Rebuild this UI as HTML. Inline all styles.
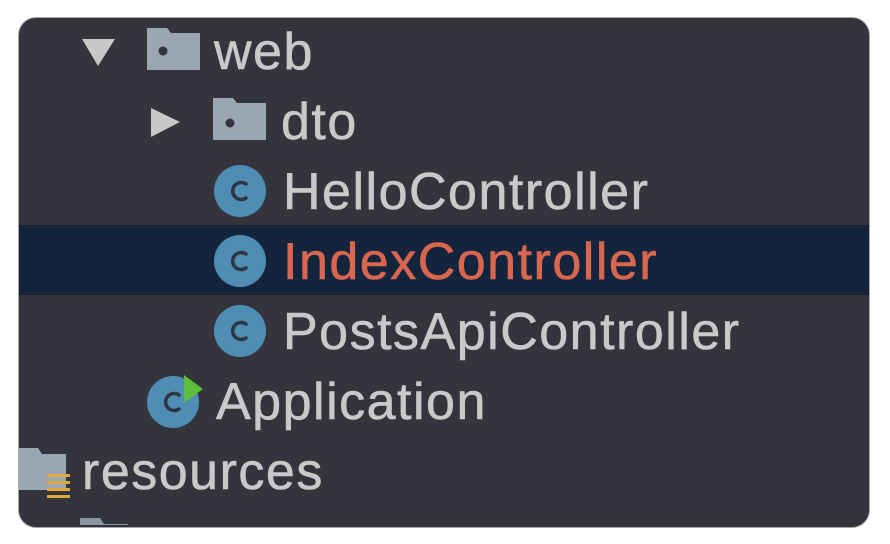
<!DOCTYPE html>
<html><head><style>
html,body{margin:0;padding:0;background:#fff;width:890px;height:544px;overflow:hidden}
.panel{position:absolute;left:18px;top:17px;width:850px;height:509px;background:#33343c;border:1.5px solid #a8a8a8;border-radius:18px;overflow:hidden}
.sel{position:absolute;left:0;top:207px;width:100%;height:70px;background:#13243c}
.t{position:absolute;font-family:"Liberation Sans",sans-serif;font-size:52px;line-height:52px;color:#c9c9c9;letter-spacing:1.5px;white-space:nowrap;-webkit-text-stroke:0.6px currentColor}
svg{position:absolute}
</style></head><body>
<div class="panel">
<div class="sel"></div>
</div>
<svg width="890" height="544" style="left:0;top:0">
<defs><clipPath id="cp"><rect x="19" y="18" width="849" height="507" rx="17"/></clipPath></defs>
<g clip-path="url(#cp)">
<polygon points="82,39 115,39 98,66" fill="#c8c8c8"/>
<path d="M147,28 h20 l4,5 h29 v37 h-53z" fill="#9aa6b2"/>
<circle cx="163" cy="51" r="4.5" fill="#33343c"/>
<polygon points="151,108 151,137 180,122" fill="#c8c8c8"/>
<path d="M213,98 h20 l4,5 h29 v37 h-53z" fill="#9aa6b2"/>
<circle cx="230" cy="123" r="4.5" fill="#33343c"/>
<g fill="#4f8db5">
<circle cx="240" cy="191" r="26"/><circle cx="240" cy="261" r="26"/><circle cx="240" cy="331" r="26"/><circle cx="173" cy="402" r="26"/>
</g>
<g fill="none" stroke="#2d3440" stroke-width="3.5" stroke-linecap="round">
<path d="M246,184 a8.5,8.5 0 1 0 0,14"/>
<path d="M246,254 a8.5,8.5 0 1 0 0,14"/>
<path d="M246,324 a8.5,8.5 0 1 0 0,14"/>
<path d="M179,395 a8.5,8.5 0 1 0 0,14"/>
</g>
<polygon points="184,375 184,403 203,389" fill="#5fbf3a"/>
<path d="M18,448 h20 l4,6 h24 v36 h-48z" fill="#9aa6b2"/>
<g fill="#e0a93a"><rect x="47" y="474" width="23" height="3"/><rect x="47" y="481" width="23" height="3"/><rect x="47" y="488" width="23" height="3"/><rect x="47" y="495" width="23" height="3"/></g>
<path d="M80,518 h20 l4,6 h24 v30 h-48z" fill="#8a96a2"/>
</g>
</svg>
<div class="t" style="left:214px;top:26px">web</div>
<div class="t" style="left:281px;top:96px">dto</div>
<div class="t" style="left:283px;top:166px">HelloController</div>
<div class="t" style="left:283px;top:236px;color:#d9674f">IndexController</div>
<div class="t" style="left:283px;top:306px">PostsApiController</div>
<div class="t" style="left:216px;top:376px">Application</div>
<div class="t" style="left:82px;top:446px">resources</div>
</body></html>
